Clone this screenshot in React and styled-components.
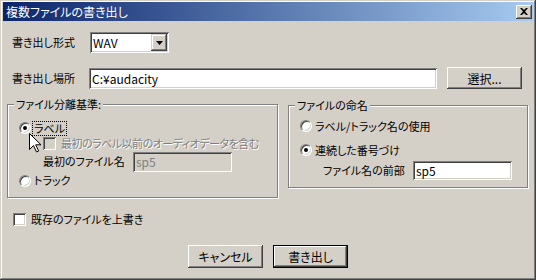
import React from 'react';
import styled, { createGlobalStyle } from 'styled-components';

const GlobalStyle = createGlobalStyle`
  html, body {
    margin: 0;
    padding: 0;
    background: #d4d0c8;
  }
  body {
    font-family: "Noto Sans CJK JP", "Liberation Sans", sans-serif;
    font-size: 11px;
    font-feature-settings: "palt";
    color: #000;
  }
`;

const Window = styled.div`
  box-sizing: border-box;
  width: 536px;
  height: 280px;
  padding: 2px 3px 3px 3px;
  background: #d4d0c8;
  box-shadow: inset -1px -1px #404040, inset 1px 1px #d4d0c8,
    inset -2px -2px #808080, inset 2px 2px #fff;
  display: flex;
  flex-direction: column;
`;

const TitleBar = styled.div`
  height: 19px;
  flex: none;
  display: flex;
  align-items: center;
  justify-content: space-between;
  padding: 0 1px 0 3px;
  background: linear-gradient(to right, #0a246a, #a6caf0);
  color: #fff;
  font-size: 12px;
  line-height: 19px;
`;

const CloseButton = styled.div`
  box-sizing: border-box;
  width: 16px;
  height: 14px;
  display: flex;
  align-items: center;
  justify-content: center;
  background: #d4d0c8;
  box-shadow: inset -1px -1px #404040, inset 1px 1px #fff,
    inset -2px -2px #808080, inset 2px 2px #d4d0c8;
`;

const Body = styled.div`
  flex: 1;
  display: flex;
  flex-direction: column;
  padding: 0 4px;
`;

const Row = styled.div`
  display: flex;
  align-items: center;
  flex: none;
  height: ${p => p.$h || 16}px;
  margin-top: ${p => p.$mt || 0}px;
  padding-left: ${p => p.$pl || 0}px;
  line-height: 13px;
`;

const Label = styled.span`
  flex: none;
  width: ${p => (p.$w ? `${p.$w}px` : 'auto')};
  margin-left: ${p => p.$ml || 0}px;
  color: ${p => (p.$disabled ? '#808080' : '#000')};
  text-shadow: ${p => (p.$disabled ? '1px 1px 0 #fff' : 'none')};
  letter-spacing: ${p => (p.$tight ? '-0.5px' : 'normal')};
  white-space: nowrap;
`;

const Field = styled.div`
  box-sizing: border-box;
  flex: none;
  width: ${p => p.$w}px;
  height: ${p => p.$h || 21}px;
  display: flex;
  align-items: center;
  padding: 0 2px 0 3px;
  background: ${p => (p.$disabled ? '#d4d0c8' : '#fff')};
  color: ${p => (p.$disabled ? '#808080' : '#000')};
  box-shadow: inset 1px 1px #808080, inset -1px -1px #fff,
    inset 2px 2px #404040, inset -2px -2px #d4d0c8;
  font-size: 12px;
  font-feature-settings: normal;
  span { flex: 1; }
`;

const DropButton = styled.div`
  box-sizing: border-box;
  width: 16px;
  height: 17px;
  flex: none;
  display: flex;
  align-items: center;
  justify-content: center;
  background: #d4d0c8;
  box-shadow: inset -1px -1px #404040, inset 1px 1px #d4d0c8,
    inset -2px -2px #808080, inset 2px 2px #fff;
`;

const Button = styled.div`
  box-sizing: border-box;
  flex: none;
  width: ${p => p.$w || 75}px;
  height: ${p => p.$h || 23}px;
  display: flex;
  align-items: center;
  justify-content: center;
  background: #d4d0c8;
  border: ${p => (p.$default ? '1px solid #000' : 'none')};
  box-shadow: inset -1px -1px #404040, inset 1px 1px #fff,
    inset -2px -2px #808080, inset 2px 2px #d4d0c8;
  margin-left: ${p => p.$ml || 0}px;
  font-size: 12px;
`;

const GroupRow = styled.div`
  display: flex;
  align-items: flex-start;
  gap: 10px;
  margin-top: 15px;
`;

const Group = styled.div`
  position: relative;
  box-sizing: border-box;
  flex: none;
  width: ${p => p.$w}px;
  height: ${p => p.$h}px;
  margin-top: ${p => p.$mt || 0}px;
  padding-top: ${p => p.$pt}px;
  border: 1px solid #808080;
  box-shadow: inset 1px 1px #fff, 1px 1px #fff;
  display: flex;
  flex-direction: column;
`;

const Legend = styled.span`
  position: absolute;
  top: -7px;
  left: ${p => p.$left}px;
  padding: 0 2px;
  line-height: 13px;
  background: #d4d0c8;
  white-space: nowrap;
`;

const Radio = styled.span`
  position: relative;
  box-sizing: border-box;
  flex: none;
  width: 12px;
  height: 12px;
  border-radius: 50%;
  background: #fff;
  border: 1px solid;
  border-color: #808080 #fff #fff #808080;
  box-shadow: inset 1px 1px #404040, inset -1px -1px #d4d0c8;
  &::after {
    content: '';
    display: ${p => (p.$checked ? 'block' : 'none')};
    position: absolute;
    left: 3px;
    top: 3px;
    width: 4px;
    height: 4px;
    border-radius: 50%;
    background: #000;
  }
`;

const Check = styled.span`
  box-sizing: border-box;
  flex: none;
  width: 13px;
  height: 13px;
  background: ${p => (p.$disabled ? '#d4d0c8' : '#fff')};
  box-shadow: inset 1px 1px #808080, inset -1px -1px #fff,
    inset 2px 2px #404040, inset -2px -2px #d4d0c8;
`;

const Focus = styled.span`
  margin-left: 2px;
  padding: 0 1px;
  outline: 1px dotted #000;
  outline-offset: 0;
`;

const Cursor = styled.svg`
  position: absolute;
  left: 21px;
  top: 28px;
`;

const ButtonRow = styled.div`
  display: flex;
  justify-content: center;
  gap: 10px;
  margin-top: 18px;
`;

export default function App() {
  return (
    <>
      <GlobalStyle />
      <Window>
        <TitleBar>
          <span>複数ファイルの書き出し</span>
          <CloseButton>
            <svg width="8" height="7" viewBox="0 0 8 7">
              <path d="M0 0h2l2 2 2-2h2L5 3.5 8 7H6L4 5 2 7H0l3-3.5z" fill="#000" />
            </svg>
          </CloseButton>
        </TitleBar>
        <Body>
          <Row $h={21} $mt={11} $pl={5}>
            <Label $w={78}>書き出し形式</Label>
            <Field $w={79}>
              <span>WAV</span>
              <DropButton>
                <svg width="7" height="4" viewBox="0 0 7 4">
                  <path d="M0 0h7L3.5 4z" fill="#000" />
                </svg>
              </DropButton>
            </Field>
          </Row>
          <Row $h={22} $mt={14} $pl={5}>
            <Label $w={77}>書き出し場所</Label>
            <Field $w={348}>
              <span>C:¥audacity</span>
            </Field>
            <Button $ml={10} $h={22}>選択...</Button>
          </Row>
          <GroupRow>
            <Group $w={271} $h={94} $pt={15}>
              <Legend $left={6}>ファイル分離基準:</Legend>
              <Row $pl={11}>
                <Radio $checked />
                <Focus>ラベル</Focus>
              </Row>
              <Row $h={15} $pl={35}>
                <Check $disabled />
                <Label $ml={5} $disabled $tight>最初のラベル以前のオーディオデータを含む</Label>
              </Row>
              <Row $h={21} $pl={35}>
                <Label $w={90}>最初のファイル名</Label>
                <Field $w={99} $h={20} $disabled>
                  <span>sp5</span>
                </Field>
              </Row>
              <Row $h={17} $pl={11}>
                <Radio />
                <Label $ml={3}>トラック</Label>
              </Row>
              <Cursor width="13" height="20" viewBox="0 0 13 20">
                <path
                  d="M0.5 0.5v16l4-4 3 6.5 2.2-1-3-6.2h5.3z"
                  fill="#fff"
                  stroke="#000"
                  strokeWidth="1"
                />
              </Cursor>
            </Group>
            <Group $w={240} $h={83} $mt={1} $pt={12}>
              <Legend $left={6}>ファイルの命名</Legend>
              <Row $pl={11}>
                <Radio />
                <Label $ml={3}>ラベル/トラック名の使用</Label>
              </Row>
              <Row $mt={8} $pl={11}>
                <Radio $checked />
                <Label $ml={3}>連続した番号づけ</Label>
              </Row>
              <Row $h={20} $mt={2} $pl={34}>
                <Label $w={90}>ファイル名の前部</Label>
                <Field $w={99} $h={19}>
                  <span>sp5</span>
                </Field>
              </Row>
            </Group>
          </GroupRow>
          <Row $mt={13} $pl={6}>
            <Check />
            <Label $ml={5}>既存のファイルを上書き</Label>
          </Row>
          <ButtonRow>
            <Button>キャンセル</Button>
            <Button $default>書き出し</Button>
          </ButtonRow>
        </Body>
      </Window>
    </>
  );
}
